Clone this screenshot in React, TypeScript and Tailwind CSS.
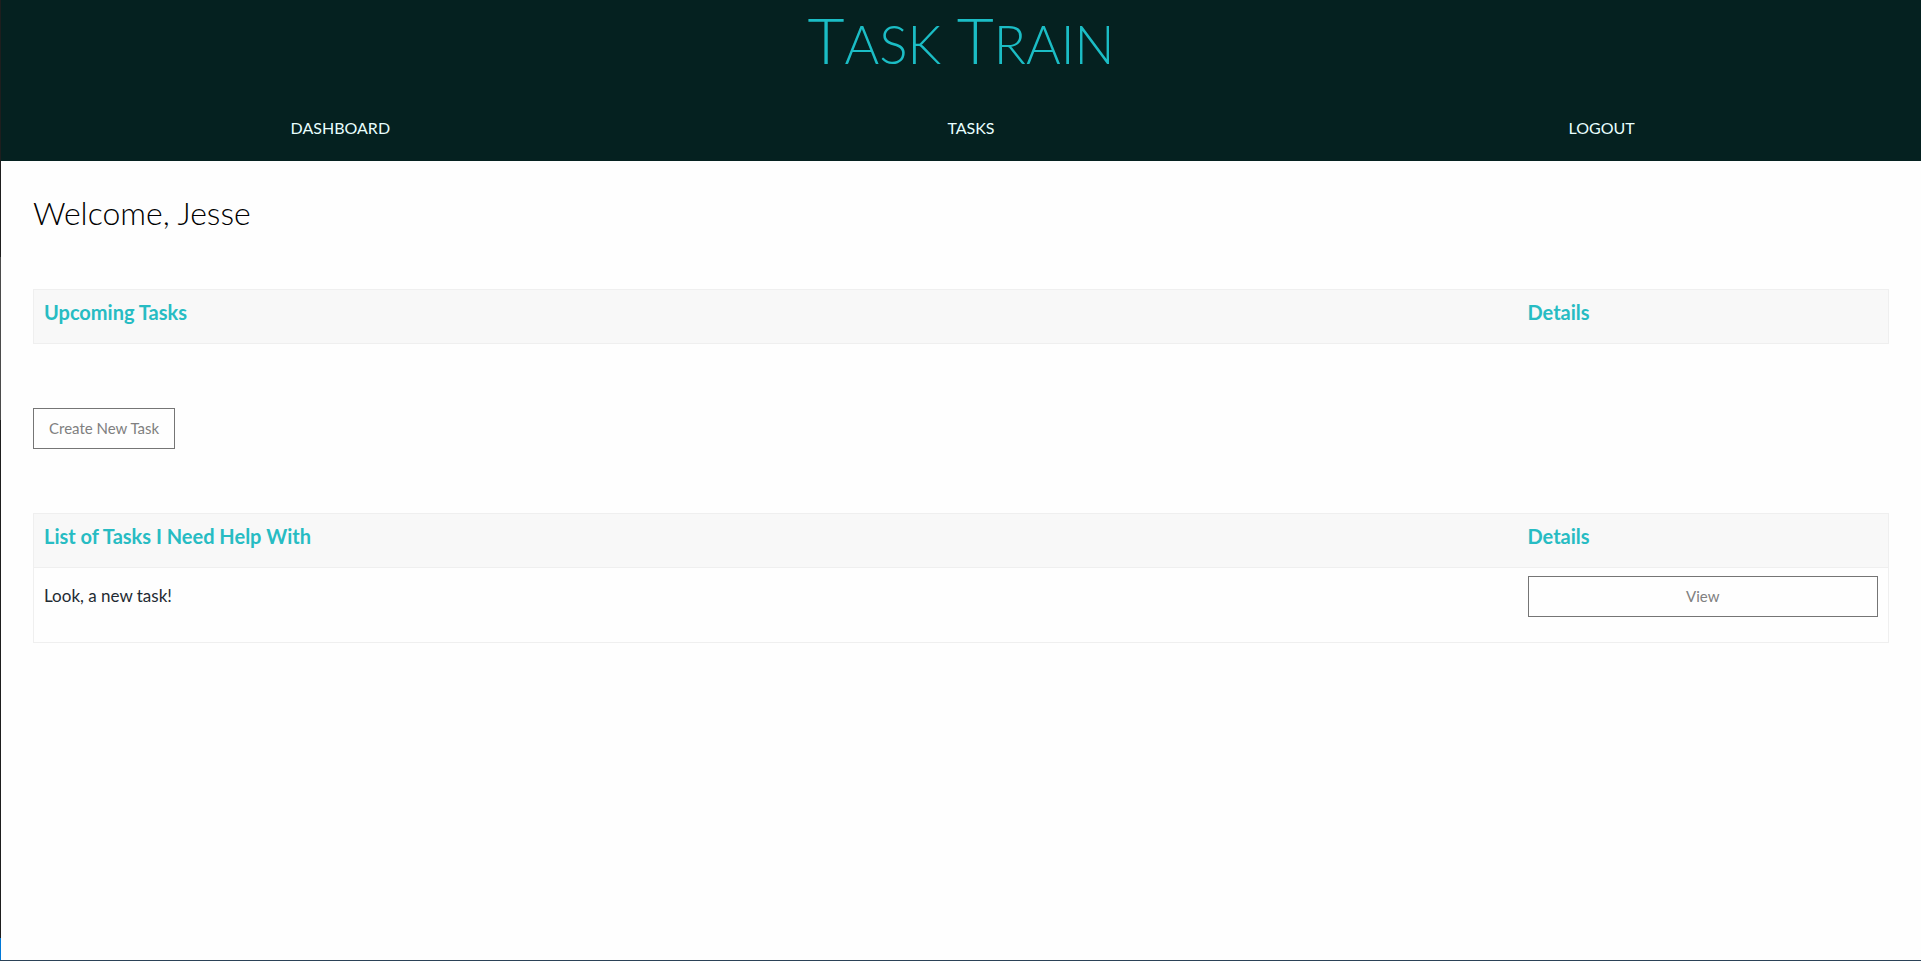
import type { ReactNode } from "react";

const navLinks = [
  { label: "DASHBOARD", href: "#dashboard" },
  { label: "TASKS", href: "#tasks" },
  { label: "LOGOUT", href: "#logout" },
];

function OutlineButton({ children, wide = false }: { children: ReactNode; wide?: boolean }) {
  return (
    <button
      type="button"
      className={`h-[41px] cursor-pointer border border-[#757575] pb-0.5 text-[15px] leading-5 text-[#808080] ${wide ? "w-full" : "px-[15px]"}`}
    >
      {children}
    </button>
  );
}

function TaskTable({ title, tasks }: { title: string; tasks: string[] }) {
  return (
    <table className="w-full table-fixed border-collapse border border-[#efefef] text-left">
      <thead>
        <tr className="h-[54px] border-b border-[#efefef] bg-[#f8f8f8] align-top text-xl leading-6 text-[#27bcc3]">
          <th scope="col" className="w-4/5 px-[10px] py-[10px] font-bold">
            {title}
          </th>
          <th scope="col" className="px-[10px] py-[10px] font-bold">
            Details
          </th>
        </tr>
      </thead>
      <tbody>
        {tasks.map((task) => (
          <tr key={task} className="h-[75px] align-top">
            <td className="px-[10px] py-4 text-[17px] leading-6 text-[#1f2b33]">{task}</td>
            <td className="px-[10px] py-2">
              <OutlineButton wide>View</OutlineButton>
            </td>
          </tr>
        ))}
      </tbody>
    </table>
  );
}

export default function App() {
  return (
    <div className="flex min-h-screen border-b border-[#2b4257] bg-[#fefefe] font-['Lato','Open_Sans',sans-serif] font-normal">
      <div aria-hidden="true" className="flex w-px shrink-0 flex-col">
        <span className="grow-[257] bg-[#1e1e1e]" />
        <span className="grow-[163] bg-[#4b4b4b]" />
        <span className="grow-[518] bg-[#1e1e1e]" />
        <span className="grow-[22] bg-[#0078d7]" />
      </div>
      <div className="min-w-0 flex-1">
        <header className="bg-[#052120]">
          <h1 className="pt-1.5 text-center text-[64px] leading-[68px] font-light text-[#1bbdc5]">
            T<span className="text-[53px]">ASK</span> T<span className="text-[53px]">RAIN</span>
          </h1>
          <nav className="grid grid-cols-3 pt-[38px] pr-1 pb-[21px] pl-6 text-center text-base leading-6 text-[#e8fffe]">
            {navLinks.map((link) => (
              <a key={link.label} href={link.href}>
                {link.label}
              </a>
            ))}
          </nav>
        </header>
        <main className="px-8 pt-8">
          <h2 className="text-[32px] leading-10 font-light text-black">Welcome, Jesse</h2>
          <div className="pt-14">
            <TaskTable title="Upcoming Tasks" tasks={[]} />
          </div>
          <div className="py-16">
            <OutlineButton>Create New Task</OutlineButton>
          </div>
          <TaskTable title="List of Tasks I Need Help With" tasks={["Look, a new task!"]} />
        </main>
      </div>
    </div>
  );
}
